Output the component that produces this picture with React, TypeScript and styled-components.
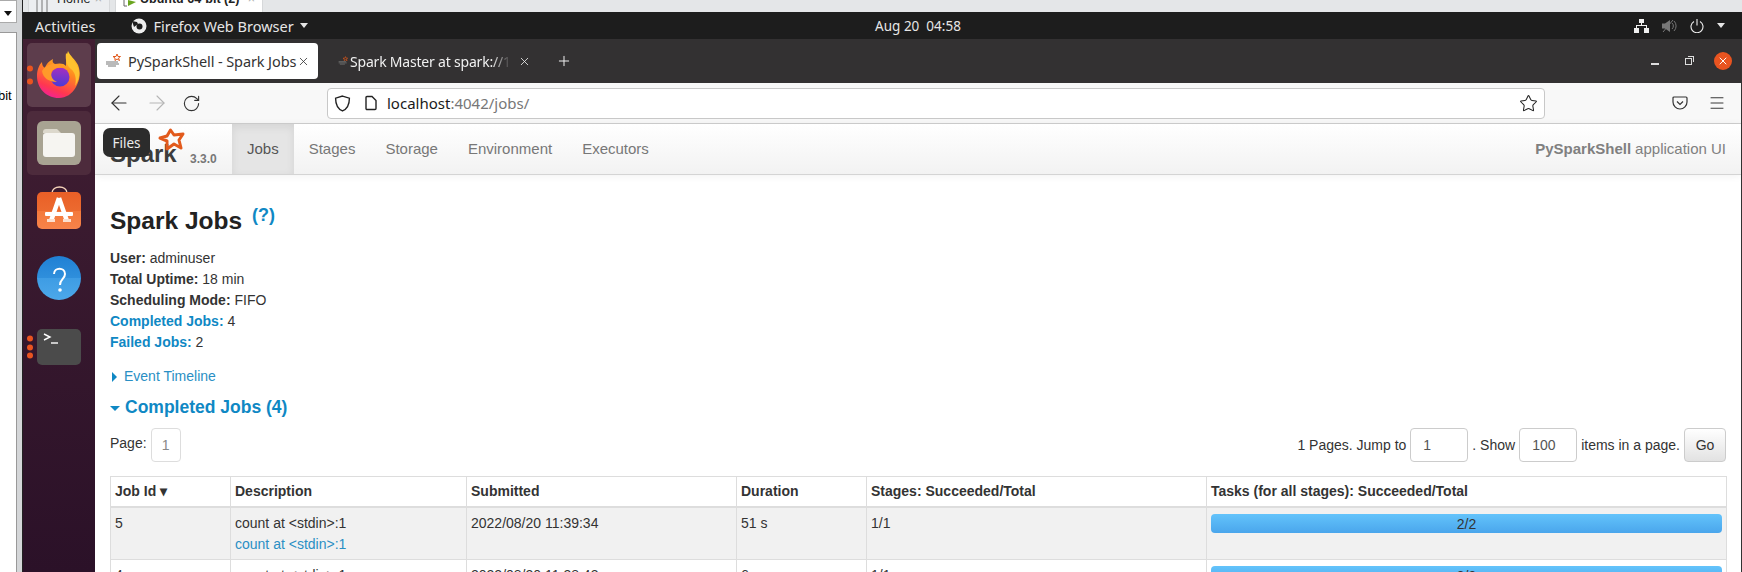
import styled, { createGlobalStyle } from "styled-components";
import { ArrowLeft, ArrowRight, RotateCw, Star, Menu, X, Plus } from "lucide-react";

const GlobalStyle = createGlobalStyle`
  html, body { margin: 0; padding: 0; background: #fff; overflow: hidden; }
  * { box-sizing: border-box; }
`;

const UI_FONT = `"Noto Sans", "Open Sans", sans-serif`;
const PAGE_FONT = `"Liberation Sans", Arial, sans-serif`;
const LINK = "#0f88c4";

const Screen = styled.div`
  width: 1742px;
  height: 572px;
  overflow: hidden;
  display: flex;
  flex-direction: column;
  background: #e4e6e8;
`;

const VmTabs = styled.div`
  height: 12px;
  flex: none;
  display: flex;
  padding-left: 28px;
  gap: 5px;
  overflow: hidden;
  font: 12.5px/12px ${PAGE_FONT};
  color: #222;
`;

const VmTab = styled.div<{ $active?: boolean; $width: number; $textLeft: number }>`
  width: ${(p) => p.$width}px;
  height: 12px;
  background: ${(p) => (p.$active ? "#fff" : "#eceef0")};
  display: flex;
  align-items: flex-start;
  padding-left: 7px;
  padding-right: 7px;
  font-weight: ${(p) => (p.$active ? 700 : 400)};
  border-left: 1px solid #d6d8da;
  border-right: 1px solid #d6d8da;
  & > b {
    font-weight: inherit;
    margin-left: ${(p) => p.$textLeft}px;
    margin-top: -7px;
    white-space: nowrap;
    flex: 1;
  }
  & > i {
    font-style: normal;
    font-weight: 400;
    color: #aaa;
    margin-top: -7px;
  }
`;

const Main = styled.div`
  flex: 1;
  display: flex;
  min-height: 0;
`;

const LeftStrip = styled.div`
  width: 23px;
  flex: none;
  margin-top: -12px;
  position: relative;
  z-index: 1;
  background: #d4d6d8;
  border-right: 1px solid #222;
  padding-right: 5px;
  display: flex;
  flex-direction: column;
  gap: 9px;
  font: 13px ${PAGE_FONT};
`;

const StripSelect = styled.div`
  height: 23px;
  background: #fff;
  border: 1px solid #aaa;
  border-left: none;
  display: flex;
  justify-content: flex-end;
  align-items: center;
  padding: 3px 4px 0 0;
  &::after {
    content: "";
    border-left: 4px solid transparent;
    border-right: 4px solid transparent;
    border-top: 5px solid #111;
  }
`;

const StripPanel = styled.div`
  flex: 1;
  background: #fff;
  border: 1px solid #999;
  border-left: none;
  border-bottom: none;
  padding-top: 55px;
  font-size: 13px;
  text-indent: -2px;
  overflow: hidden;
`;

const Desktop = styled.div`
  flex: 1;
  min-width: 0;
  display: flex;
  flex-direction: column;
`;

const TopBar = styled.div`
  height: 27px;
  flex: none;
  background: #1d1d1d;
  color: #e6e6e6;
  font: 14.5px ${UI_FONT};
  position: relative;
  display: flex;
  align-items: center;
  padding-left: 12px;
`;

const AppMenu = styled.div`
  display: flex;
  align-items: center;
  gap: 6px;
  margin-left: 36px;
`;

const Caret = styled.span`
  display: inline-block;
  border-left: 4.5px solid transparent;
  border-right: 4.5px solid transparent;
  border-top: 5px solid #e6e6e6;
`;

const Clock = styled.div`
  position: absolute;
  left: 0;
  right: 0;
  text-align: center;
  padding-left: 71px;
  font-size: 13.5px;
  white-space: pre;
`;

const Tray = styled.div`
  margin-left: auto;
  display: flex;
  align-items: center;
  gap: 13px;
  padding-right: 17px;
`;

const Workspace = styled.div`
  flex: 1;
  min-height: 0;
  display: flex;
  position: relative;
`;

const Dock = styled.div`
  width: 72px;
  flex: none;
  background: linear-gradient(#421f33, #2b1128);
  padding: 4px 4px 0;
  display: flex;
  flex-direction: column;
`;

const DockItem = styled.div<{ $bg?: string; $height: number; $gap?: number }>`
  width: 64px;
  height: ${(p) => p.$height}px;
  margin-bottom: ${(p) => p.$gap ?? 0}px;
  border-radius: 5px;
  background: ${(p) => p.$bg ?? "transparent"};
  display: flex;
  align-items: center;
  justify-content: center;
  position: relative;
  flex: none;
`;

const Dots = styled.div<{ $gap: number }>`
  position: absolute;
  left: 0;
  top: 50%;
  transform: translateY(-50%);
  display: flex;
  flex-direction: column;
  gap: ${(p) => p.$gap}px;
  & > i {
    width: 6px;
    height: 6px;
    border-radius: 50%;
    background: #e95420;
    display: block;
  }
`;

const Tooltip = styled.div`
  position: absolute;
  left: 80px;
  top: 89px;
  width: 47px;
  height: 29px;
  border-radius: 7px;
  background: #2c2c2c;
  color: #ececec;
  font: 13.5px ${UI_FONT};
  display: flex;
  align-items: center;
  justify-content: center;
  z-index: 5;
`;

const Browser = styled.div`
  flex: 1;
  min-width: 0;
  display: flex;
  flex-direction: column;
  background: #fff;
  border-right: 1px solid #333;
`;

const TabBar = styled.div`
  height: 44px;
  flex: none;
  background: #333132;
  display: flex;
  align-items: center;
  padding-left: 2px;
  color: #f0f0f0;
  font: 14.5px ${UI_FONT};
`;

const ActiveTab = styled.div`
  width: 221px;
  height: 36px;
  background: #fff;
  color: #333;
  border-radius: 4px;
  display: flex;
  align-items: center;
  padding: 0 8px 0 8px;
  white-space: nowrap;
  letter-spacing: -0.1px;
`;

const TabTitle = styled.span`
  margin-left: 7px;
  flex: 1;
  overflow: hidden;
`;

const IdleTab = styled.div`
  width: 221px;
  height: 36px;
  margin-left: 8px;
  display: flex;
  align-items: center;
  padding-left: 12px;
  white-space: nowrap;
`;

const FadedTitle = styled.span`
  width: 161px;
  margin-left: 2px;
  margin-right: 7px;
  overflow: hidden;
  font-size: 14px;
  letter-spacing: -0.2px;
  -webkit-mask-image: linear-gradient(90deg, #000 88%, transparent);
  mask-image: linear-gradient(90deg, #000 88%, transparent);
`;

const NewTab = styled.div`
  margin-left: 9px;
  display: flex;
`;

const WindowControls = styled.div`
  margin-left: auto;
  display: flex;
  align-items: center;
  padding-right: 9px;
`;

const MinButton = styled.div`
  width: 8px;
  height: 1.5px;
  background: #ddd;
  margin-top: 6px;
`;

const RestoreButton = styled.div`
  width: 7px;
  height: 7px;
  border: 1.3px solid #ddd;
  margin-left: 26px;
  position: relative;
  &::after {
    content: "";
    position: absolute;
    right: -3px;
    top: -3px;
    width: 5px;
    height: 5px;
    border-top: 1px solid #ddd;
    border-right: 1px solid #ddd;
  }
`;

const CloseButton = styled.div`
  width: 18px;
  height: 18px;
  border-radius: 50%;
  background: #e95420;
  margin-left: 22px;
  display: flex;
  align-items: center;
  justify-content: center;
  color: #fff;
`;

const Toolbar = styled.div`
  height: 41px;
  flex: none;
  background: #f8f8f8;
  border-bottom: 1px solid #cfcfcf;
  display: flex;
  align-items: center;
  padding-left: 12px;
  color: #333;
`;

const NavIcons = styled.div`
  width: 94px;
  display: flex;
  align-items: center;
  justify-content: space-between;
`;

const UrlBar = styled.div`
  width: 1218px;
  height: 31px;
  margin-left: 126px;
  background: #fff;
  border: 1px solid #c8c8c8;
  border-radius: 4px;
  display: flex;
  align-items: center;
  gap: 12px;
  padding: 0 6px 0 6px;
  font: 15px ${UI_FONT};
  color: #777;
`;

const UrlText = styled.span`
  margin-left: -4px;
  flex: 1;
  b {
    font-weight: 400;
    color: #1a1a1a;
  }
`;

const ToolRight = styled.div`
  margin-left: 127px;
  display: flex;
  align-items: center;
  gap: 20px;
`;

const SparkNav = styled.div`
  height: 51px;
  flex: none;
  background: linear-gradient(#fff, #f2f2f2);
  border-bottom: 1px solid #d4d4d4;
  box-shadow: 0 1px 8px rgba(0, 0, 0, 0.06);
  display: flex;
  align-items: stretch;
  font: 15px ${PAGE_FONT};
  color: #777;
`;

const Brand = styled.div`
  width: 137px;
  flex: none;
  position: relative;
`;

const BrandWord = styled.span`
  position: absolute;
  left: 15px;
  top: 14px;
  font: 700 24px/32px ${PAGE_FONT};
  color: #3c3c3c;
`;

const BrandStar = styled.svg`
  position: absolute;
  left: 62px;
  top: 2px;
`;

const BrandVersion = styled.span`
  position: absolute;
  left: 95px;
  top: 28px;
  font: 700 12px/14px ${PAGE_FONT};
  color: #777;
`;

const NavItem = styled.div<{ $active?: boolean }>`
  padding: 0 15px 1px;
  display: flex;
  align-items: center;
  color: ${(p) => (p.$active ? "#555" : "#777")};
  background: ${(p) => (p.$active ? "#e5e5e5" : "transparent")};
  box-shadow: ${(p) => (p.$active ? "inset 0 3px 8px rgba(0,0,0,0.08)" : "none")};
`;

const NavRight = styled.div`
  margin-left: auto;
  padding: 0 15px 1px 0;
  display: flex;
  align-items: center;
  color: #808080;
  b {
    margin-right: 4px;
  }
`;

const Page = styled.div`
  flex: 1;
  min-height: 0;
  overflow: hidden;
  padding: 0 15px;
  font: 14px/21px ${PAGE_FONT};
  color: #333;
`;

const Title = styled.h3`
  margin: 26px 0 7px;
  font: 700 24.5px/40px ${PAGE_FONT};
  color: #222;
  height: 40px;
  sup {
    font-size: 18px;
    line-height: 0;
    color: ${LINK};
    position: relative;
    top: 1px;
    margin-left: 3px;
    vertical-align: super;
  }
`;

const SummaryList = styled.ul`
  list-style: none;
  margin: 0;
  padding: 0;
`;

const SummaryLink = styled.strong`
  color: ${LINK};
`;

const Timeline = styled.div`
  margin-top: 13px;
  padding-left: 2px;
  color: #2a8fc4;
  display: flex;
  align-items: center;
  gap: 7px;
  &::before {
    content: "";
    border-top: 5px solid transparent;
    border-bottom: 5px solid transparent;
    border-left: 5px solid ${LINK};
  }
`;

const Section = styled.h4`
  margin: 5px 0 0;
  font: 700 17.5px/30px ${PAGE_FONT};
  color: ${LINK};
  display: flex;
  align-items: center;
  gap: 5px;
  &::before {
    content: "";
    border-left: 5px solid transparent;
    border-right: 5px solid transparent;
    border-top: 5px solid ${LINK};
    margin-top: 2px;
  }
`;

const Pager = styled.div`
  margin-top: 6px;
  height: 34px;
  display: flex;
  align-items: center;
`;

const PagerLabel = styled.span`
  margin-right: 4px;
  position: relative;
  top: -2px;
`;

const PageBox = styled.span`
  width: 30px;
  height: 34px;
  border: 1px solid #ddd;
  border-radius: 4px;
  color: #888;
  display: flex;
  align-items: center;
  justify-content: center;
`;

const PagerRight = styled.div`
  margin-left: auto;
  display: flex;
  align-items: center;
  height: 34px;
`;

const PagerInput = styled.span<{ $width: number }>`
  width: ${(p) => p.$width}px;
  height: 34px;
  margin: 0 4px;
  padding-left: 12px;
  border: 1px solid #ccc;
  border-radius: 4px;
  color: #555;
  display: flex;
  align-items: center;
`;

const GoButton = styled.span`
  width: 42px;
  height: 34px;
  margin-left: 4px;
  border: 1px solid #ccc;
  border-radius: 4px;
  background: linear-gradient(#fff, #e2e2e2);
  display: flex;
  align-items: center;
  justify-content: center;
`;

const JobsTable = styled.table`
  margin-top: 14px;
  width: 100%;
  table-layout: fixed;
  border-collapse: collapse;
  border: 1px solid #ddd;
`;

const Th = styled.th<{ $width: number }>`
  width: ${(p) => p.$width}px;
  height: 30px;
  padding: 0 4px;
  text-align: left;
  font-weight: 700;
  color: #333;
  border: 1px solid #ddd;
  border-bottom: 2px solid #ddd;
  white-space: nowrap;
`;

const Td = styled.td<{ $shade?: boolean }>`
  padding: 5px 4px 4px;
  height: 51px;
  vertical-align: top;
  border: 1px solid #ddd;
  background: ${(p) => (p.$shade ? "#f1f1f1" : "#fff")};
  white-space: nowrap;
`;

const DescLink = styled.div`
  color: #2a8fc4;
`;

const Progress = styled.div`
  height: 19px;
  margin: 1px 0 0;
  border-radius: 4px;
  background: linear-gradient(#63c3fb, #4aa6ec);
  text-align: center;
  font-size: 14px;
  line-height: 20px;
  color: #333;
`;

const FirefoxIcon = () => (
  <svg width="46" height="48" viewBox="0 0 46 48">
    <defs>
      <linearGradient id="fxBody" x1="0.7" y1="0" x2="0.3" y2="1">
        <stop offset="0" stopColor="#ffd02e" />
        <stop offset="0.4" stopColor="#ff8a1f" />
        <stop offset="0.8" stopColor="#ff3750" />
        <stop offset="1" stopColor="#f2209a" />
      </linearGradient>
      <linearGradient id="fxCore" x1="0.5" y1="0" x2="0.4" y2="1">
        <stop offset="0" stopColor="#a62fc0" />
        <stop offset="1" stopColor="#4a3bd6" />
      </linearGradient>
    </defs>
    <path fill="url(#fxBody)" d="M23 47C10 47 1 37 1 25c0-6 2-11 5-14 0 3 1 5 3 6 1-4 4-7 8-9-1 3 0 4 2 5 4-1 9-1 11 2 0-5 0-10 2-15 2 5 7 8 10 14 3 7 2 15-2 22-4 7-10 11-17 11z" />
    <circle cx="24" cy="26" r="9.500" fill="url(#fxCore)" />
    <path fill="#ff9a2a" d="M6 20c3-5 7-7 12-7 4 0 7 2 8 4-4-1-8 0-10 3-2 4 0 9 5 11-8 0-14-4-15-11z" />
    <path fill="#ffc22f" d="M30 2c4 5 11 9 13 18 1 5-1 11-4 15 2-7 0-14-4-17-4-3-6-9-5-16z" />
  </svg>
);

const FilesIcon = () => (
  <svg width="44" height="44" viewBox="0 0 44 44">
    <rect width="44" height="44" rx="6" fill="#a8a392" />
    <path d="M6 11a3 3 0 0 1 3-3h11l4 4H6z" fill="#dcd8cc" />
    <rect x="6" y="12" width="32" height="24" rx="3" fill="#f6f5f1" />
  </svg>
);

const StoreIcon = () => (
  <svg width="44" height="44" viewBox="0 0 44 44">
    <defs>
      <linearGradient id="store" x1="0" y1="0" x2="0" y2="1">
        <stop offset="0" stopColor="#e95f27" />
        <stop offset="0.5" stopColor="#ec6a2f" />
        <stop offset="0.5" stopColor="#f3793c" />
        <stop offset="1" stopColor="#f7834a" />
      </linearGradient>
    </defs>
    <path d="M15 7c0-8 15-8 15 0" fill="none" stroke="#f7d5bb" strokeWidth="1.500" />
    <rect y="6" width="44" height="37" rx="5" fill="url(#store)" />
    <path d="M22 12l-8 23M22 12l8 23" stroke="#fff" strokeWidth="4.500" fill="none" />
    <rect x="8" y="26" width="28" height="4" rx="1" fill="#fff" />
    <rect x="10" y="33" width="8" height="3" fill="#fbe0d0" />
    <rect x="26" y="33" width="8" height="3" fill="#fbe0d0" />
  </svg>
);

const HelpIcon = () => (
  <svg width="44" height="44" viewBox="0 0 44 44">
    <defs>
      <linearGradient id="help" x1="0" y1="0" x2="0" y2="1">
        <stop offset="0" stopColor="#2080d4" />
        <stop offset="0.5" stopColor="#2f8fdc" />
        <stop offset="0.5" stopColor="#3e9ce4" />
        <stop offset="1" stopColor="#4ca8ea" />
      </linearGradient>
    </defs>
    <circle cx="22" cy="22" r="22" fill="url(#help)" />
    <path d="M17 18c0-7 11-7 11 0 0 5-5 5-5 11" fill="none" stroke="#fff" strokeWidth="2" />
    <circle cx="23" cy="34" r="1.800" fill="#fff" />
  </svg>
);

const TerminalIcon = () => (
  <svg width="44" height="36" viewBox="0 0 44 36">
    <rect width="44" height="36" rx="5" fill="#4b4b4b" />
    <path d="M7 5l6 3-6 3" fill="none" stroke="#fff" strokeWidth="1.400" />
    <path d="M14 14h7" stroke="#fff" strokeWidth="1.400" />
  </svg>
);

const SparkFavicon = ({ size }: { size: number }) => (
  <svg width={size} height={size} viewBox="0 0 16 16">
    <path d="M12 1l1 2.500 2.500 0-2 1.500 1 2.500-2.500-1.500-2 1.500 0-2.500-2-1.500 3 0z" fill="none" stroke="#e25a1c" strokeWidth="1" />
    <path d="M1 9h12M1 11h13M3 13h8" stroke="#777" strokeWidth="1.200" />
  </svg>
);

const SparkStar = () => (
  <BrandStar width="30" height="30" viewBox="0 0 30 30">
    <path
      d="M13.500 4L17 9l9-1-4 6 2 8-7-4-7 5 0-8-7-3 7-2z"
      fill="none"
      stroke="#e25a1c"
      strokeWidth="3"
      strokeLinejoin="round"
    />
  </BrandStar>
);

const ShieldIcon = () => (
  <svg width="17" height="17" viewBox="0 0 16 16" fill="none" stroke="#222" strokeWidth="1.300">
    <path d="M8 1l6.500 2c0 6.500-2 10-6.500 12C3.500 13 1.500 9.500 1.500 3z" />
  </svg>
);

const PageIcon = () => (
  <svg width="16" height="16" viewBox="0 0 16 16" fill="none" stroke="#222" strokeWidth="1.400">
    <path d="M3 2.500a1 1 0 0 1 1-1h5l4 4v8a1 1 0 0 1-1 1H4a1 1 0 0 1-1-1z" />
  </svg>
);

const PocketIcon = () => (
  <svg width="16" height="16" viewBox="0 0 16 16" fill="none" stroke="#333" strokeWidth="1.200">
    <path d="M2 2h12a1 1 0 0 1 1 1v4a7 7 0 0 1-14 0V3a1 1 0 0 1 1-1z" />
    <path d="M5 6.500l3 3 3-3" />
  </svg>
);

const NetworkIcon = () => (
  <svg width="15" height="14" viewBox="0 0 15 14" fill="#f0f0f0">
    <rect x="5" y="0" width="5" height="4" />
    <rect x="0" y="9" width="5" height="5" />
    <rect x="10" y="9" width="5" height="5" />
    <path d="M7 4h1v2h5v3h-1V7H3v2H2V6h5z" />
  </svg>
);

const MutedIcon = () => (
  <svg width="15" height="14" viewBox="0 0 15 14">
    <path d="M0 4.500h3L8 1v12L3 9.500H0z" fill="#777" />
    <path d="M10 4a4 4 0 0 1 0 6M12 2a7 7 0 0 1 0 10" fill="none" stroke="#777" strokeWidth="1" />
    <path d="M1 13L11 1" stroke="#777" strokeWidth="1" />
  </svg>
);

const PowerIcon = () => (
  <svg width="14" height="14" viewBox="0 0 14 14" fill="none" stroke="#eee" strokeWidth="1.100">
    <path d="M4 2.500a6 6 0 1 0 6 0M7 0v6.500" />
  </svg>
);

const FirefoxGlyph = () => (
  <svg width="16" height="16" viewBox="0 0 16 16">
    <circle cx="8" cy="8" r="7.500" fill="#eee" />
    <circle cx="8.500" cy="8.500" r="3" fill="#1d1d1d" />
    <path d="M1 3l5 1 1 2-4 3z" fill="#1d1d1d" />
  </svg>
);

const HomeGlyph = () => (
  <svg width="12" height="12" viewBox="0 0 12 12" fill="none" stroke="#777" strokeWidth="1">
    <path d="M1 0v12M6 0v12M11 0v12" />
  </svg>
);

const VmGlyph = () => (
  <svg width="14" height="12" viewBox="0 0 14 12">
    <path d="M1 0v6h3" fill="none" stroke="#666" strokeWidth="1" />
    <path d="M5 0l8 2-8 4z" fill="#6aa51f" />
  </svg>
);

export default function App() {
  return (
    <Screen>
      <GlobalStyle />
      <VmTabs>
        <VmTab $width={82} $textLeft={9}>
          <HomeGlyph />
          <b>Home</b>
          <i>×</i>
        </VmTab>
        <VmTab $width={148} $active $textLeft={3}>
          <VmGlyph />
          <b>Ubuntu 64-bit (2)</b>
          <i>×</i>
        </VmTab>
      </VmTabs>
      <Main>
        <LeftStrip>
          <StripSelect />
          <StripPanel>bit</StripPanel>
        </LeftStrip>
        <Desktop>
          <TopBar>
            Activities
            <AppMenu>
              <FirefoxGlyph />
              Firefox Web Browser
              <Caret />
            </AppMenu>
            <Clock>{"Aug 20  04:58"}</Clock>
            <Tray>
              <NetworkIcon />
              <MutedIcon />
              <PowerIcon />
              <Caret />
            </Tray>
          </TopBar>
          <Workspace>
            <Dock>
              <DockItem $height={64} $bg="#5d3d4c" $gap={4}>
                <Dots $gap={7}><i /><i /></Dots>
                <FirefoxIcon />
              </DockItem>
              <DockItem $height={64} $bg="#4d2b3c" $gap={9}>
                <FilesIcon />
              </DockItem>
              <DockItem $height={48} $gap={23}>
                <StoreIcon />
              </DockItem>
              <DockItem $height={46} $gap={28}>
                <HelpIcon />
              </DockItem>
              <DockItem $height={36}>
                <Dots $gap={2.500}><i /><i /><i /></Dots>
                <TerminalIcon />
              </DockItem>
            </Dock>
            <Tooltip>Files</Tooltip>
            <Browser>
              <TabBar>
                <ActiveTab>
                  <SparkFavicon size={16} />
                  <TabTitle>PySparkShell - Spark Jobs</TabTitle>
                  <X size={13} strokeWidth={1.5} />
                </ActiveTab>
                <IdleTab>
                  <SparkFavicon size={10} />
                  <FadedTitle>Spark Master at spark://172.16</FadedTitle>
                  <X size={13} strokeWidth={1.5} />
                </IdleTab>
                <NewTab><Plus size={16} strokeWidth={1.5} /></NewTab>
                <WindowControls>
                  <MinButton />
                  <RestoreButton />
                  <CloseButton><X size={12} strokeWidth={2} /></CloseButton>
                </WindowControls>
              </TabBar>
              <Toolbar>
                <NavIcons>
                  <ArrowLeft size={24} strokeWidth={1.1} />
                  <ArrowRight size={24} strokeWidth={1.1} color="#b5b5b5" />
                  <RotateCw size={19} strokeWidth={1.4} />
                </NavIcons>
                <UrlBar>
                  <ShieldIcon />
                  <PageIcon />
                  <UrlText><b>localhost</b>:4042/jobs/</UrlText>
                  <Star size={19} strokeWidth={1.3} color="#222" />
                </UrlBar>
                <ToolRight>
                  <PocketIcon />
                  <Menu size={18} strokeWidth={1.3} />
                </ToolRight>
              </Toolbar>
              <SparkNav>
                <Brand>
                  <BrandWord>Spark</BrandWord>
                  <SparkStar />
                  <BrandVersion>3.3.0</BrandVersion>
                </Brand>
                <NavItem $active>Jobs</NavItem>
                <NavItem>Stages</NavItem>
                <NavItem>Storage</NavItem>
                <NavItem>Environment</NavItem>
                <NavItem>Executors</NavItem>
                <NavRight><b>PySparkShell</b> application UI</NavRight>
              </SparkNav>
              <Page>
                <Title>Spark Jobs <sup>(?)</sup></Title>
                <SummaryList>
                  <li><strong>User:</strong> adminuser</li>
                  <li><strong>Total Uptime:</strong> 18 min</li>
                  <li><strong>Scheduling Mode:</strong> FIFO</li>
                  <li><SummaryLink>Completed Jobs:</SummaryLink> 4</li>
                  <li><SummaryLink>Failed Jobs:</SummaryLink> 2</li>
                </SummaryList>
                <Timeline>Event Timeline</Timeline>
                <Section>Completed Jobs (4)</Section>
                <Pager>
                  <PagerLabel>Page:</PagerLabel>
                  <PageBox>1</PageBox>
                  <PagerRight>
                    1 Pages. Jump to
                    <PagerInput $width={58}>1</PagerInput>
                    . Show
                    <PagerInput $width={58}>100</PagerInput>
                    items in a page.
                    <GoButton>Go</GoButton>
                  </PagerRight>
                </Pager>
                <JobsTable>
                  <thead>
                    <tr>
                      <Th $width={120}>Job Id ▾</Th>
                      <Th $width={236}>Description</Th>
                      <Th $width={270}>Submitted</Th>
                      <Th $width={130}>Duration</Th>
                      <Th $width={340}>Stages: Succeeded/Total</Th>
                      <Th $width={520}>Tasks (for all stages): Succeeded/Total</Th>
                    </tr>
                  </thead>
                  <tbody>
                    <tr>
                      <Td $shade>5</Td>
                      <Td $shade>count at &lt;stdin&gt;:1<DescLink>count at &lt;stdin&gt;:1</DescLink></Td>
                      <Td $shade>2022/08/20 11:39:34</Td>
                      <Td $shade>51 s</Td>
                      <Td $shade>1/1</Td>
                      <Td $shade><Progress>2/2</Progress></Td>
                    </tr>
                    <tr>
                      <Td>4</Td>
                      <Td>count at &lt;stdin&gt;:1<DescLink>count at &lt;stdin&gt;:1</DescLink></Td>
                      <Td>2022/08/20 11:38:43</Td>
                      <Td>6 s</Td>
                      <Td>1/1</Td>
                      <Td><Progress>3/3</Progress></Td>
                    </tr>
                  </tbody>
                </JobsTable>
              </Page>
            </Browser>
          </Workspace>
        </Desktop>
      </Main>
    </Screen>
  );
}
